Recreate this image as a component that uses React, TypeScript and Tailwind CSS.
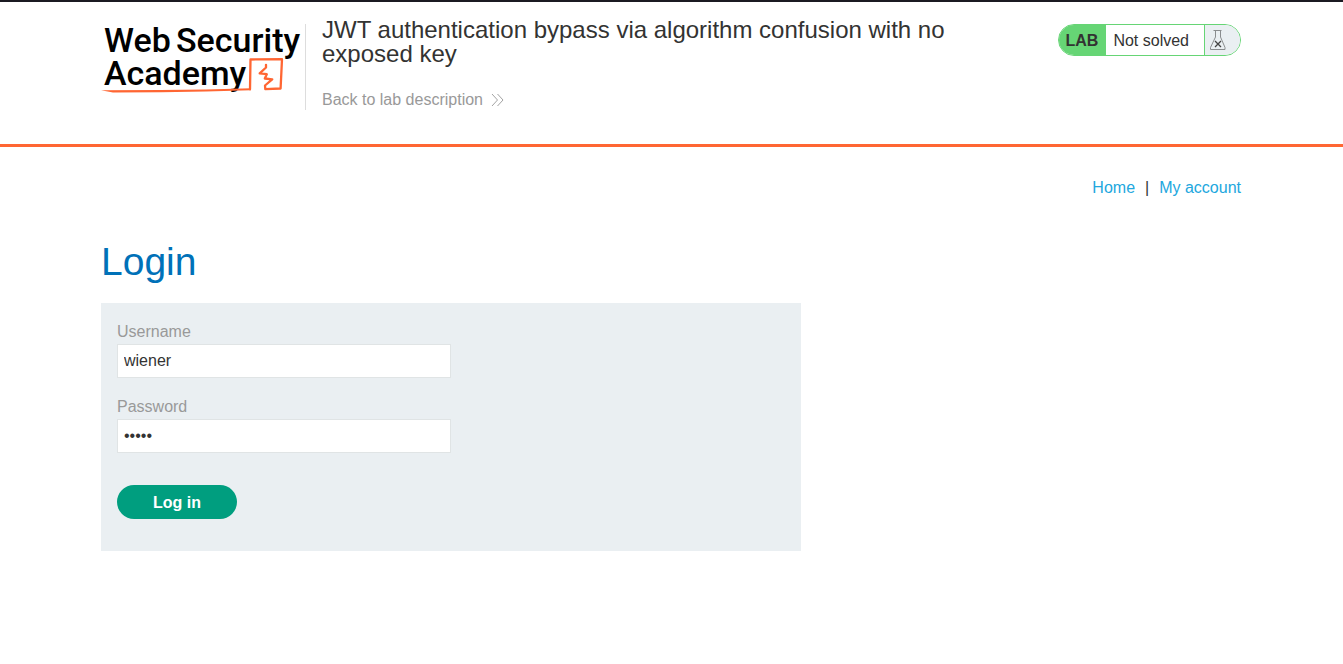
import React from "react";

function AcademyLogo() {
  return (
    <svg viewBox="0 0 200 76" className="block h-[76px] w-[200px] overflow-visible" role="img" aria-label="Web Security Academy">
      <g fill="#000" fontFamily="Roboto, sans-serif" fontSize="34" fontWeight="500">
        <text x="3" y="28">Web</text>
        <text x="75" y="28">Security</text>
        <text x="3" y="61">Academy</text>
      </g>
      <g fill="none" stroke="#ff6633" strokeLinejoin="round" strokeLinecap="round">
        <path strokeWidth="2.3" d="M149 65.300L149.500 35.500L181 35.200L179.600 64.500L164.300 65.200L164 61.500L171.200 55.300L163.800 54.500L165.800 50.200L158.700 49.300L165 43.500L165 40.800" />
      </g>
      <path fill="#ff6633" d="M0 66.300L60 66L105 65.600L150 64.200L150 66.300L105 67.500L60 68.200L12 68.400Z" />
    </svg>
  );
}

function Flask() {
  return (
    <svg viewBox="0 0 18 22" className="h-[22px] w-[18px]" fill="none" aria-hidden="true">
      <path d="M4.500 1.500H12.500M6.500 1.500V8L1.500 18.500V20.500H16V18.500L11.500 8V1.500" stroke="#8a8d8f" />
      <path d="M6 12L12 18M12 12L6 18" stroke="#444" strokeWidth="1.300" />
    </svg>
  );
}

function Field({ id, label, type, value }: { id: string; label: string; type: string; value: string }) {
  return (
    <div className="flex flex-col">
      <label htmlFor={id} className="pb-0.5 leading-5 text-[#999999]">{label}</label>
      <input
        id={id}
        name={id}
        type={type}
        defaultValue={value}
        className="h-[34px] w-1/2 border border-[#e0e4e5] bg-white px-1.5 text-[#333333] outline-none"
      />
    </div>
  );
}

export default function App() {
  return (
    <div className="min-h-screen bg-white font-['Liberation_Sans',Arial,sans-serif] text-base text-[#333332]">
      <header className="border-t-2 border-b-3 border-t-[#1b1a22] border-b-[#ff6633]">
        <div className="mx-auto flex max-w-[1141px] items-start pt-4 pr-px pb-[34px]">
          <a href="#academy" className="mt-1.5 mr-1 shrink-0"><AcademyLogo /></a>
          <div className="mt-1.5 h-[86px] w-px shrink-0 bg-[#dddddd]" />
          <div className="flex min-w-0 flex-1 flex-col items-start pl-4">
            <h1 className="max-w-[680px] text-2xl leading-6">
              JWT authentication bypass via algorithm confusion with no exposed key
            </h1>
            <a href="#lab" className="mt-6 flex items-center gap-2 leading-5 text-[#999999]">
              Back to lab description
              <svg viewBox="0 0 13 14" className="h-3.5 w-[13px]" fill="none" stroke="#a3a3a3" aria-hidden="true">
                <path d="M1 1L6.500 7L1 13M6.500 1L12 7L6.500 13" />
              </svg>
            </a>
          </div>
          <div className="mt-1.5 flex h-8 shrink-0 items-stretch overflow-hidden rounded-full border border-[#66d575] leading-[31px]">
            <span className="bg-[#66d575] pr-2 pl-[7px] font-bold">LAB</span>
            <span className="pr-[15px] pl-[7px]">Not solved</span>
            <span className="flex w-9 items-center border-l border-[#66d575] bg-[#eaeff2] pl-1"><Flask /></span>
          </div>
        </div>
      </header>
      <main className="mx-auto max-w-[1141px] pr-px">
        <nav className="flex justify-end gap-2.5 pt-[31px] leading-5">
          <a href="#home" className="text-[#22a7de]">Home</a>
          <span>|</span>
          <a href="#account" className="text-[#22a7de]">My account</a>
        </nav>
        <h2 className="mt-10 text-[39px] leading-12 text-[#0071b8]">Login</h2>
        <form className="mt-[17px] max-w-[700px] bg-[#eaeff2] px-4 pt-[19px] pb-8" onSubmit={(e) => e.preventDefault()}>
          <div className="flex flex-col gap-[19px]">
            <Field id="username" label="Username" type="text" value="wiener" />
            <Field id="password" label="Password" type="password" value="peter" />
          </div>
          <button type="submit" className="mt-8 block h-[34px] w-[120px] rounded-full bg-[#009e7f] pt-px font-bold text-white">Log in</button>
        </form>
      </main>
    </div>
  );
}
